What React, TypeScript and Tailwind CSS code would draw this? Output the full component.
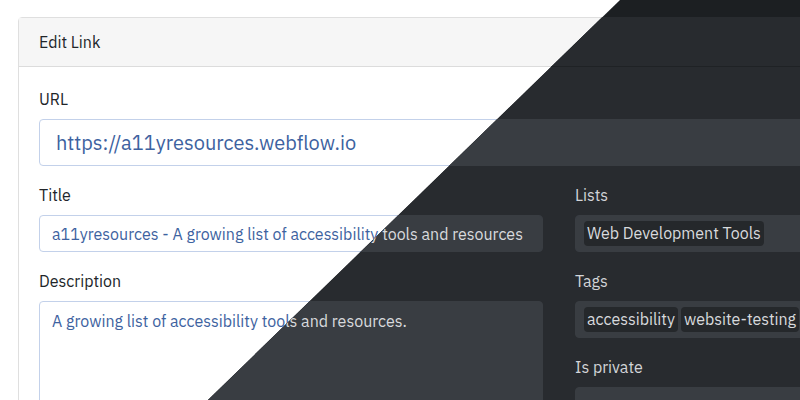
import React from "react";

type Theme = {
  page: string;
  card: string;
  header: string;
  label: string;
  input: string;
  badge: string;
};

const light: Theme = {
  page: "bg-white",
  card: "bg-white border-[#dfdfdf]",
  header: "bg-[#f6f6f6] border-[#dcdcdc] text-[#212529]",
  label: "text-[#212529]",
  input: "bg-white border-[#c3d1ea] text-[#3d62a0]",
  badge: "bg-[#e9ecef] text-[#3d62a0]",
};

const dark: Theme = {
  page: "bg-[#1c1f22]",
  card: "bg-[#282b2f] border-[#282b2f]",
  header: "bg-[#282b2f] border-[#1f2225] text-[#d6d8db]",
  label: "text-[#d3d5d8]",
  input: "bg-[#393d42] border-[#393d42] text-[#d8dadd]",
  badge: "bg-[#25282b] text-[#d8dadd]",
};

function Field({ t, label, children }: { t: Theme; label: string; children: React.ReactNode }) {
  return (
    <div className="flex flex-col">
      <label className={`mb-2 h-6 text-[16px] leading-6 ${t.label}`}>{label}</label>
      {children}
    </div>
  );
}

function Badges({ t, items }: { t: Theme; items: string[] }) {
  return (
    <div className={`flex h-[37px] items-center gap-[3px] rounded border px-2 ${t.input}`}>
      {items.map((item) => (
        <span key={item} className={`h-[25px] whitespace-nowrap rounded px-[3px] text-[16px] leading-[25px] ${t.badge}`}>
          {item}
        </span>
      ))}
    </div>
  );
}

function Form({ t }: { t: Theme }) {
  return (
    <div className={`h-[400px] w-[800px] overflow-hidden pl-[18px] pt-[17px] ${t.page}`}>
      <div className={`w-[1100px] rounded border ${t.card}`}>
        <div className={`flex h-[49px] items-center border-b px-5 text-[16px] ${t.header}`}>Edit Link</div>
        <div className="flex flex-col gap-[17px] px-5 pt-5">
          <Field t={t} label="URL">
            <div className={`flex h-[47px] items-center rounded border px-4 text-[20px] ${t.input}`}>
              https://a11yresources.webflow.io
            </div>
          </Field>
          <div className="grid grid-cols-[504px_504px] gap-x-8">
            <div className="flex flex-col gap-[17px]">
              <Field t={t} label="Title">
                <div className={`flex h-[37px] items-center whitespace-nowrap rounded border px-3 text-[16px] ${t.input}`}>
                  a11yresources - A growing list of accessibility tools and resources
                </div>
              </Field>
              <Field t={t} label="Description">
                <div className={`h-[120px] rounded border px-3 pt-[7px] text-[16px] leading-6 ${t.input}`}>
                  A growing list of accessibility tools and resources.
                </div>
              </Field>
            </div>
            <div className="flex flex-col gap-[17px]">
              <Field t={t} label="Lists">
                <Badges t={t} items={["Web Development Tools"]} />
              </Field>
              <Field t={t} label="Tags">
                <Badges t={t} items={["accessibility", "website-testing"]} />
              </Field>
              <Field t={t} label="Is private">
                <div className={`h-[37px] rounded border ${t.input}`} />
              </Field>
            </div>
          </div>
        </div>
      </div>
    </div>
  );
}

export default function App() {
  return (
    <div className="relative h-[400px] w-[800px] overflow-hidden font-['IBM_Plex_Sans','Noto_Sans',sans-serif]">
      <Form t={light} />
      <div className="absolute inset-0 [clip-path:polygon(620px_0,800px_0,800px_400px,208px_400px)]">
        <Form t={dark} />
      </div>
    </div>
  );
}
